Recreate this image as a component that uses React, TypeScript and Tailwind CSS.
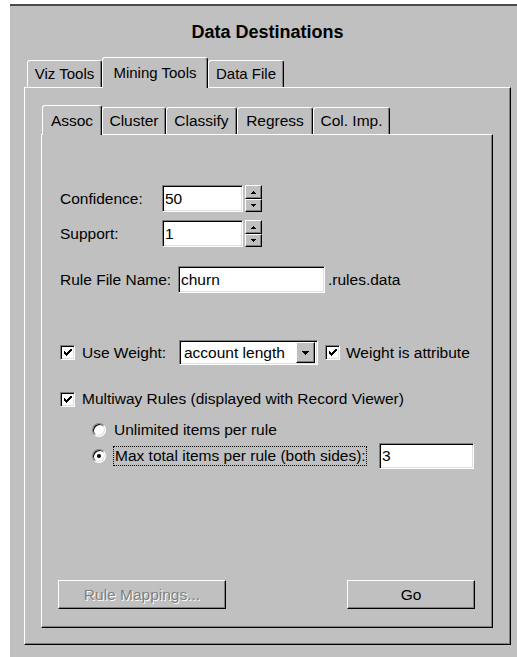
import React from "react";

// Windows-classic bevels
const raised =
  "border border-t-white border-l-white border-r-black border-b-black shadow-[inset_-1px_-1px_0_#808080]";
const sunken =
  "border border-t-[#808080] border-l-[#808080] border-r-white border-b-white shadow-[inset_1px_1px_0_#000,inset_-1px_-1px_0_#dfdfdf]";

function Tab({
  label,
  width,
  selected,
  tall,
}: {
  label: string;
  width: string;
  selected?: boolean;
  tall: string;
}) {
  return (
    <div
      className={`${width} ${
        selected ? `${tall} -mb-px relative z-10 bg-[#c0c0c0]` : "h-[27px]"
      } flex items-center justify-center whitespace-nowrap rounded-t-[3px] border-t border-l border-r border-t-white border-l-white border-r-black shadow-[inset_-1px_0_0_#808080]`}
    >
      {label}
    </div>
  );
}

function Arrow({ up }: { up?: boolean }) {
  return (
    <svg width="5" height="3" viewBox="0 0 5 3" shapeRendering="crispEdges">
      {up ? (
        <path d="M2 0h1v1h1v1h1v1H0V2h1V1h1z" fill="#000" />
      ) : (
        <path d="M0 0h5v1H4v1H3v1H2V2H1V1H0z" fill="#000" />
      )}
    </svg>
  );
}

function Spinner() {
  return (
    <div className="ml-[2px] flex h-[27px] flex-col">
      <div className={`${raised} flex h-[14px] w-[17px] items-center justify-center bg-[#c0c0c0]`}>
        <Arrow up />
      </div>
      <div className={`${raised} flex h-[13px] w-[17px] items-center justify-center bg-[#c0c0c0]`}>
        <Arrow />
      </div>
    </div>
  );
}

function Field({ value, width, height }: { value: string; width: string; height: string }) {
  return (
    <div className={`${sunken} ${width} ${height} flex items-center bg-white pl-[2px] leading-none`}>
      {value}
    </div>
  );
}

function Check() {
  return (
    <div className={`${sunken} flex h-[15px] w-[15px] shrink-0 items-center justify-center bg-white`}>
      <svg width="8" height="7" viewBox="0 0 8 7" shapeRendering="crispEdges">
        <path
          d="M7 0h1v2H7v1H6v1H5v1H4v1H3v1H2V6H1V5H0V2h1v1h1v1h1V3h1V2h1V1h1V0z"
          fill="#000"
        />
      </svg>
    </div>
  );
}

function Radio({ on }: { on?: boolean }) {
  return (
    <div className="relative h-[14px] w-[14px] shrink-0 rounded-full border border-t-[#808080] border-l-[#808080] border-r-white border-b-white bg-white shadow-[inset_1px_1px_0_#000,inset_-1px_-1px_0_#dfdfdf]">
      {on && (
        <div className="absolute left-[4px] top-[4px] h-[4px] w-[4px] rounded-full bg-black" />
      )}
    </div>
  );
}

export default function App() {
  return (
    <div className="min-h-screen bg-white pl-[10px] pt-[4px] font-['Liberation_Sans',Arial,Helvetica,sans-serif] text-[15.5px] text-black">
      <div className="h-[653px] border-t-2 border-t-[#4a4a4a] bg-[#c0c0c0]">
        <div className="ml-[14px] w-[487px]">
          <div className="pt-[15px] text-center text-[18px] font-bold leading-[22px]">
            Data Destinations
          </div>

          {/* outer tab strip */}
          <div className="mt-[14px] flex h-[30px] items-end pl-[3px] text-[15px]">
            <Tab label="Viz Tools" width="w-[75px]" tall="h-[31px]" />
            <Tab label="Mining Tools" width="w-[106px]" tall="h-[31px]" selected />
            <Tab label="Data File" width="w-[76px]" tall="h-[31px]" />
          </div>

          <div className="h-[558px] border-l border-t border-r border-b border-l-white border-t-white border-r-black border-b-black pl-[16px] pt-[17px] shadow-[inset_-1px_-1px_0_#808080]">
            <div className="w-[452px]">
              {/* inner tab strip */}
              <div className="flex h-[29px] items-end pl-[1px]">
                <Tab label="Assoc" width="w-[60px]" tall="h-[30px]" selected />
                <Tab label="Cluster" width="w-[64px]" tall="h-[30px]" />
                <Tab label="Classify" width="w-[71px]" tall="h-[30px]" />
                <Tab label="Regress" width="w-[76px]" tall="h-[30px]" />
                <Tab label="Col. Imp." width="w-[77px]" tall="h-[30px]" />
              </div>

              <div className="flex h-[494px] flex-col border-l border-t border-r border-b border-l-white border-t-white border-r-black border-b-black pl-[18px] shadow-[inset_-1px_-1px_0_#808080]">
                <div className="mt-[50px] flex h-[27px] items-center">
                  <span className="w-[102px]">Confidence:</span>
                  <Field value="50" width="w-[81px]" height="h-[27px]" />
                  <Spinner />
                </div>
                <div className="mt-[8px] flex h-[27px] items-center">
                  <span className="w-[102px]">Support:</span>
                  <Field value="1" width="w-[81px]" height="h-[27px]" />
                  <Spinner />
                </div>
                <div className="mt-[19px] flex h-[27px] items-center">
                  <span className="w-[118px]">Rule File Name:</span>
                  <Field value="churn" width="w-[147px]" height="h-[27px]" />
                  <span className="ml-[3px]">.rules.data</span>
                </div>

                <div className="mt-[47px] flex h-[25px] items-center">
                  <Check />
                  <span className="ml-[7px] w-[97px]">Use Weight:</span>
                  <div className={`${sunken} flex h-[25px] w-[139px] items-center bg-white p-[2px]`}>
                    <span className="flex-1 pl-[2px] leading-none">account length</span>
                    <div className={`${raised} flex h-[21px] w-[19px] items-center justify-center bg-[#c0c0c0]`}>
                      <svg width="7" height="4" viewBox="0 0 7 4" shapeRendering="crispEdges">
                        <path d="M0 0h7v1H6v1H5v1H4v1H3V3H2V2H1V1H0z" fill="#000" />
                      </svg>
                    </div>
                  </div>
                  <div className="ml-[7px]">
                    <Check />
                  </div>
                  <span className="ml-[6px]">Weight is attribute</span>
                </div>

                <div className="mt-[24px] flex h-[20px] items-center">
                  <Check />
                  <span className="ml-[7px]">Multiway Rules (displayed with Record Viewer)</span>
                </div>

                <div className="mt-[11px] flex h-[20px] items-center pl-[32px]">
                  <Radio />
                  <span className="ml-[8px]">Unlimited items per rule</span>
                </div>
                <div className="mt-[3px] flex h-[26px] items-center pl-[32px]">
                  <Radio on />
                  <span className="ml-[7px] w-[254px] whitespace-nowrap border border-dotted border-black px-[1px] leading-[18px]">
                    Max total items per rule (both sides):
                  </span>
                  <div className="ml-[12px]">
                    <Field value="3" width="w-[95px]" height="h-[26px]" />
                  </div>
                </div>

                <div className="-ml-[2px] mt-[111px] flex h-[29px]">
                  <div
                    className={`${raised} flex h-[29px] w-[168px] items-center justify-center bg-[#c0c0c0] text-[#808080] [text-shadow:1px_1px_0_#fff]`}
                  >
                    Rule Mappings...
                  </div>
                  <div
                    className={`${raised} ml-[121px] flex h-[29px] w-[128px] items-center justify-center bg-[#c0c0c0]`}
                  >
                    Go
                  </div>
                </div>
              </div>
            </div>
          </div>
        </div>
      </div>
    </div>
  );
}
